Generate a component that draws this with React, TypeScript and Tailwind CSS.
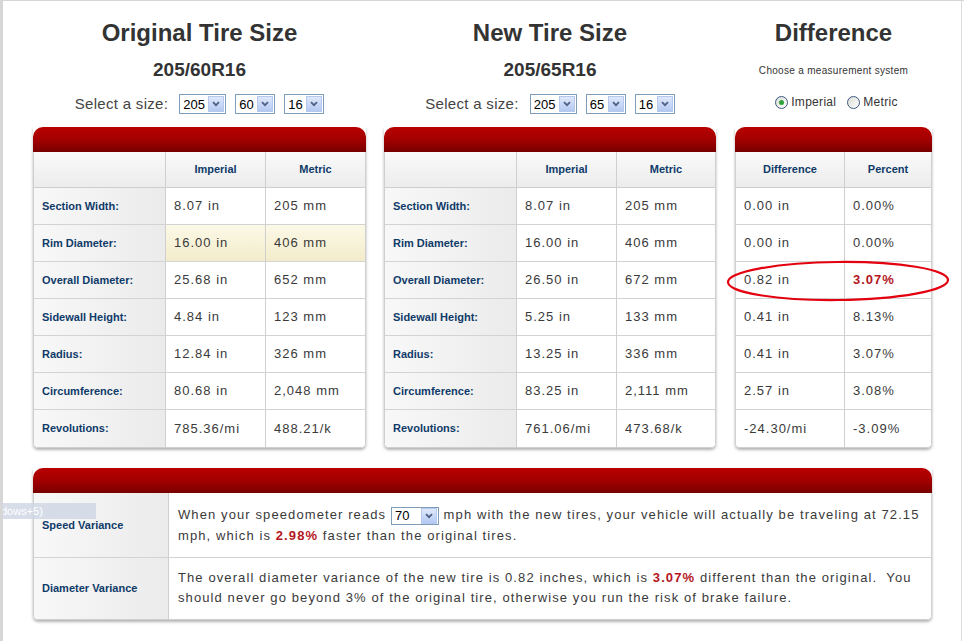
import React from "react";

const labels = [
  "Section Width:",
  "Rim Diameter:",
  "Overall Diameter:",
  "Sidewall Height:",
  "Radius:",
  "Circumference:",
  "Revolutions:",
];

const original = [
  ["8.07 in", "205 mm"],
  ["16.00 in", "406 mm"],
  ["25.68 in", "652 mm"],
  ["4.84 in", "123 mm"],
  ["12.84 in", "326 mm"],
  ["80.68 in", "2,048 mm"],
  ["785.36/mi", "488.21/k"],
];

const newer = [
  ["8.07 in", "205 mm"],
  ["16.00 in", "406 mm"],
  ["26.50 in", "672 mm"],
  ["5.25 in", "133 mm"],
  ["13.25 in", "336 mm"],
  ["83.25 in", "2,111 mm"],
  ["761.06/mi", "473.68/k"],
];

const diff = [
  ["0.00 in", "0.00%"],
  ["0.00 in", "0.00%"],
  ["0.82 in", "3.07%"],
  ["0.41 in", "8.13%"],
  ["0.41 in", "3.07%"],
  ["2.57 in", "3.08%"],
  ["-24.30/mi", "-3.09%"],
];

const font = "font-['Liberation_Sans',Arial,sans-serif]";

function Arrow() {
  return (
    <span className="flex h-[16px] w-[16px] items-center justify-center border border-[#b7c8ee] bg-gradient-to-b from-[#dfe8fb] to-[#b4c9f2]">
      <svg width="8" height="6" viewBox="0 0 8 6">
        <path d="M1 1.2 L4 4.2 L7 1.2" fill="none" stroke="#4d6185" strokeWidth="1.8" />
      </svg>
    </span>
  );
}

function FakeSelect({ value, className }: { value: string; className: string }) {
  return (
    <span className={`inline-flex items-center justify-between border border-[#7f9db9] bg-white pl-[3px] pr-[1px] ${className}`}>
      <span className="text-[13px] leading-none tracking-normal text-black">{value}</span>
      <Arrow />
    </span>
  );
}

function RedBar() {
  return <div className="h-[25px] rounded-t-[10px] bg-gradient-to-b from-[#b90000] via-[#a30000] to-[#780000]" />;
}

function Radio({ checked, label }: { checked?: boolean; label: string }) {
  return (
    <span className="inline-flex items-center gap-[3px]">
      <span className="flex h-[13px] w-[13px] items-center justify-center rounded-full border border-[#3b5a82] bg-gradient-to-br from-[#dcdcd6] to-white">
        {checked && <span className="h-[5px] w-[5px] rounded-full bg-[#2fa33a]" />}
      </span>
      <span className="text-[12px] tracking-[0.3px] text-[#333]">{label}</span>
    </span>
  );
}

function SizeTable({ data, heads, highlight }: { data: string[][]; heads: string[]; highlight?: boolean }) {
  return (
    <div className="rounded-b-[5px] shadow-[0_2px_3px_rgba(0,0,0,0.3)]">
      <RedBar />
      <div className="overflow-hidden rounded-b-[5px] border-x border-b border-[#cfcfcf]">
        <div className="flex h-[36px] border-b border-[#cfcfcf]">
          <div className="h-full w-[132px] border-r border-[#cfcfcf] bg-gradient-to-b from-[#fafafa] to-[#ececec]" />
          <div className="flex h-full w-[100px] items-center justify-center border-r border-[#cfcfcf] bg-gradient-to-b from-[#fafafa] to-[#ececec] text-[11px] font-bold text-[#0f3b69]">
            {heads[0]}
          </div>
          <div className="flex h-full flex-1 items-center justify-center bg-gradient-to-b from-[#fafafa] to-[#ececec] text-[11px] font-bold text-[#0f3b69]">
            {heads[1]}
          </div>
        </div>
        {data.map((r, i) => {
          const cellBg = highlight && i === 1 ? "bg-gradient-to-b from-[#fbf8e6] to-[#f3eccb]" : "bg-white";
          return (
            <div key={i} className={`flex h-[37px] ${i < data.length - 1 ? "border-b border-[#d3d3d3]" : ""}`}>
              <div className="flex h-full w-[132px] items-center border-r border-[#cfcfcf] bg-gradient-to-r from-[#f8f8f8] to-[#ebebeb] pl-[8px] text-[11px] font-bold text-[#0f3b69]">
                {labels[i]}
              </div>
              <div className={`flex h-full w-[100px] items-center border-r border-[#cfcfcf] ${cellBg} pl-[8px] text-[13px] tracking-[1px] text-[#3a3a3a]`}>
                {r[0]}
              </div>
              <div className={`flex h-full flex-1 items-center ${cellBg} pl-[8px] text-[13px] tracking-[1px] text-[#3a3a3a]`}>{r[1]}</div>
            </div>
          );
        })}
      </div>
    </div>
  );
}

function DiffTable() {
  return (
    <div className="rounded-b-[5px] shadow-[0_2px_3px_rgba(0,0,0,0.3)]">
      <RedBar />
      <div className="overflow-hidden rounded-b-[5px] border-x border-b border-[#cfcfcf]">
        <div className="flex h-[36px] border-b border-[#cfcfcf]">
          <div className="flex h-full w-[109px] items-center justify-center border-r border-[#cfcfcf] bg-gradient-to-b from-[#fafafa] to-[#ececec] text-[11px] font-bold text-[#0f3b69]">
            Difference
          </div>
          <div className="flex h-full flex-1 items-center justify-center bg-gradient-to-b from-[#fafafa] to-[#ececec] text-[11px] font-bold text-[#0f3b69]">
            Percent
          </div>
        </div>
        {diff.map((r, i) => (
          <div key={i} className={`flex h-[37px] ${i < diff.length - 1 ? "border-b border-[#d3d3d3]" : ""}`}>
            <div className="flex h-full w-[109px] items-center border-r border-[#cfcfcf] bg-white pl-[8px] text-[13px] tracking-[1px] text-[#3a3a3a]">
              {r[0]}
            </div>
            <div
              className={`flex h-full flex-1 items-center bg-white pl-[8px] text-[13px] tracking-[1px] ${
                i === 2 ? "font-bold text-[#b5161e]" : "text-[#3a3a3a]"
              }`}
            >
              {r[1]}
            </div>
          </div>
        ))}
      </div>
    </div>
  );
}

function Heading({ title, size }: { title: string; size: string }) {
  return (
    <>
      <div className="mt-[18px] h-[28px] text-center text-[24px] font-bold leading-[28px] text-[#333]">{title}</div>
      <div className="mt-[12px] h-[22px] text-center text-[19px] font-bold leading-[22px] text-[#333]">{size}</div>
    </>
  );
}

function SizePicker({ values }: { values: string[] }) {
  return (
    <div className="mt-[13px] flex h-[20px] items-center justify-center gap-[9px]">
      <span className="mr-[2px] text-[15px] font-light tracking-[0.3px] text-[#444]">Select a size:</span>
      <FakeSelect value={values[0]} className="h-[20px] w-[47px]" />
      <FakeSelect value={values[1]} className="h-[20px] w-[40px]" />
      <FakeSelect value={values[2]} className="h-[20px] w-[40px]" />
    </div>
  );
}

export default function App() {
  return (
    <div className={`relative h-[641px] w-[964px] overflow-hidden border-l-[3px] border-t border-[#d6d6d6] bg-white ${font}`}>
      <div className="absolute right-[2px] top-0 h-full w-px bg-[#dcdcdc]" />

      <div className="flex pl-[30px]">
        <div className="w-[333px]">
          <Heading title="Original Tire Size" size="205/60R16" />
          <SizePicker values={["205", "60", "16"]} />
          <div className="mt-[13px]">
            <SizeTable data={original} heads={["Imperial", "Metric"]} highlight />
          </div>
        </div>

        <div className="ml-[18px] w-[332px]">
          <Heading title="New Tire Size" size="205/65R16" />
          <SizePicker values={["205", "65", "16"]} />
          <div className="mt-[13px]">
            <SizeTable data={newer} heads={["Imperial", "Metric"]} />
          </div>
        </div>

        <div className="ml-[19px] w-[197px]">
          <div className="mt-[18px] h-[28px] text-center text-[24px] font-bold leading-[28px] text-[#333]">Difference</div>
          <div className="mt-[17px] h-[14px] text-center text-[10px] leading-[14px] tracking-[0.3px] text-[#333]">
            Choose a measurement system
          </div>
          <div className="mt-[14px] flex h-[20px] items-center justify-center gap-[11px] pl-[6px]">
            <Radio checked label="Imperial" />
            <Radio label="Metric" />
          </div>
          <div className="mt-[15px]">
            <DiffTable />
          </div>
        </div>
      </div>

      <div className="ml-[30px] mt-[20px] w-[899px] rounded-b-[5px] shadow-[0_2px_3px_rgba(0,0,0,0.3)]">
        <RedBar />
        <div className="overflow-hidden rounded-b-[5px] border-x border-b border-[#cfcfcf]">
          <div className="flex h-[65px] border-b border-[#d3d3d3]">
            <div className="flex w-[135px] items-center border-r border-[#cfcfcf] bg-gradient-to-r from-[#f8f8f8] to-[#ebebeb] pl-[8px] text-[11px] font-bold text-[#0f3b69]">
              Speed Variance
            </div>
            <div className="flex-1 bg-white pl-[9px] pr-[9px] pt-[11px] text-[13px] leading-[21px] tracking-[1.1px] text-[#3a3a3a]">
              When your speedometer reads{" "}
              <FakeSelect value="70" className="h-[18px] w-[48px] align-middle" /> mph with the new tires, your vehicle will actually be
              traveling at 72.15 mph, which is <span className="font-bold text-[#b5161e]">2.98%</span> faster than the original tires.
            </div>
          </div>
          <div className="flex h-[61px]">
            <div className="flex w-[135px] items-center border-r border-[#cfcfcf] bg-gradient-to-r from-[#f8f8f8] to-[#ebebeb] pl-[8px] text-[11px] font-bold text-[#0f3b69]">
              Diameter Variance
            </div>
            <div className="flex-1 bg-white py-[10px] pl-[9px] pr-[9px] text-[13px] leading-[20px] tracking-[1.1px] text-[#3a3a3a]">
              The overall diameter variance of the new tire is 0.82 inches, which is{" "}
              <span className="font-bold text-[#b5161e]">3.07%</span> different than the original.&nbsp; You should never go beyond 3% of the
              original tire, otherwise you run the risk of brake failure.
            </div>
          </div>
        </div>
      </div>

      {/* red marker ellipse around overall diameter difference */}
      <svg className="pointer-events-none absolute left-[722px] top-[257px]" width="226" height="46" viewBox="0 0 226 46">
        <ellipse cx="113" cy="23" rx="110" ry="19" fill="none" stroke="#e3000f" strokeWidth="2.2" transform="rotate(-0.6 113 23)" />
      </svg>

      {/* stray tooltip fragment */}
      <div className="absolute left-[-3px] top-[502px] flex h-[16px] w-[96px] items-center bg-[#cdd6e4]/80 pl-[1px] text-[11px] text-white">
        dows+5)
      </div>
    </div>
  );
}
